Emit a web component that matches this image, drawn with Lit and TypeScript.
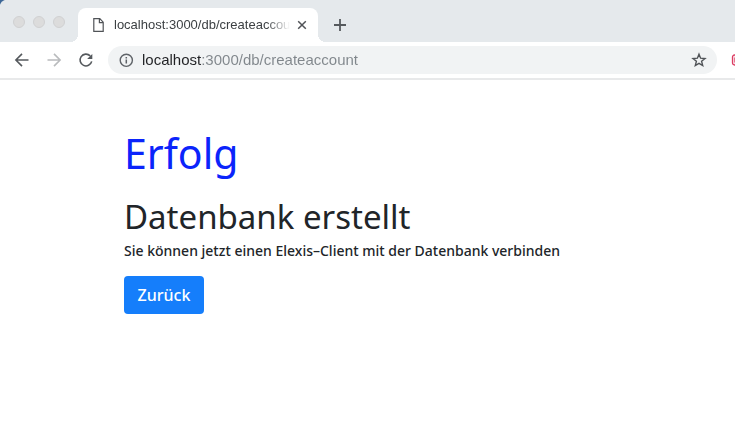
import { LitElement, html, css } from "lit";
import { customElement, state } from "lit/decorators.js";

@customElement("browser-tabs")
class BrowserTabs extends LitElement {
  static styles = css`
    :host { display: flex; height: 42px; background: linear-gradient(135deg, #3d6797 3px, #e5e9ec 4px); overflow: hidden; }
    * { box-sizing: border-box; }
    .strip { display: flex; flex: 1; align-items: flex-end; background: #e5e9ec; border-top-left-radius: 6px; }
    .dots { display: flex; gap: 8px; padding: 0 13px 14px; }
    .dot { width: 12px; height: 12px; border-radius: 50%; background: #dcdcdc; border: 1px solid #d0d1d2; }
    .tab { position: relative; display: flex; align-items: center; width: 240px; height: 34px; padding: 0 8px 0 15px; background: #fff; border-radius: 8px 8px 0 0; }
    .tab::before, .tab::after { content: ""; position: absolute; bottom: 0; width: 8px; height: 8px; }
    .tab::before { right: 100%; background: radial-gradient(circle at 0 0, transparent 8px, #fff 8px); }
    .tab::after { left: 100%; background: radial-gradient(circle at 100% 0, transparent 8px, #fff 8px); }
    .title { flex: 1; min-width: 0; margin: 0 4px 0 10px; overflow: hidden; white-space: nowrap; font: 13px/16px "Liberation Sans", sans-serif; color: #3c4043;
      -webkit-mask-image: linear-gradient(90deg, #000 calc(100% - 24px), transparent); mask-image: linear-gradient(90deg, #000 calc(100% - 24px), transparent); }
    button { display: flex; flex: none; padding: 0; border: 0; background: none; }
    .add { margin: 0 0 9px 14px; }
    svg { display: block; flex: none; }
  `;
  render() {
    return html`
      <div class="strip">
        <div class="dots"><span class="dot"></span><span class="dot"></span><span class="dot"></span></div>
        <div class="tab">
          <svg width="11" height="16" viewBox="0 0 11 16" fill="none" stroke="#505357" stroke-width="1.2"><path d="M.8 1.7h6l3.4 3.5v9.2H.8zM6.4 1.7v3.9h3.8"/></svg>
          <span class="title">localhost:3000/db/createaccount</span>
          <button aria-label="Tab schließen">
            <svg width="16" height="16" viewBox="0 0 16 16" stroke="#505357" stroke-width="1.5"><path d="M4.2 4.2l7.6 7.6M11.8 4.2l-7.6 7.6"/></svg>
          </button>
        </div>
        <button class="add" aria-label="Neuer Tab">
          <svg width="16" height="16" viewBox="0 0 16 16" stroke="#55595d" stroke-width="1.8"><path d="M8 2v12M2 8h12"/></svg>
        </button>
      </div>`;
  }
}

@customElement("browser-toolbar")
class BrowserToolbar extends LitElement {
  static styles = css`
    :host { display: flex; align-items: center; height: 38px; box-sizing: border-box; padding-left: 14px; background: #fff; border-bottom: 2px solid #e8e9ea; overflow: hidden; }
    button { display: flex; flex: none; padding: 0; border: 0; background: none; }
    svg { display: block; flex: none; }
    .nav { display: flex; gap: 16px; margin-right: 14px; }
    .omnibox { display: flex; flex: 1; min-width: 0; align-items: center; height: 28px; box-sizing: border-box; padding: 0 10px; border-radius: 14px; background: #f1f3f4; }
    .address { flex: 1; min-width: 0; height: 20px; margin: 0 8px; padding: 0; border: 0; outline: 0; font: 15px/20px "Liberation Sans", sans-serif; color: transparent;
      background: linear-gradient(90deg, #202124 60px, #80868b 60px); -webkit-background-clip: text; background-clip: text; }
    .extension { width: 18px; flex: none; overflow: hidden; padding-left: 14px; box-sizing: border-box; }
  `;
  render() {
    return html`
      <div class="nav">
        <button aria-label="Zurück">
          <svg width="16" height="16" viewBox="0 0 16 16" fill="none" stroke="#55595d" stroke-width="1.6"><path d="M14.5 8H2.4M8 1.9L1.9 8 8 14.1"/></svg>
        </button>
        <button aria-label="Vorwärts">
          <svg width="16" height="16" viewBox="0 0 16 16" fill="none" stroke="#b9bbbd" stroke-width="1.6"><path d="M1.5 8h12.1M8 1.9L14.1 8 8 14.1"/></svg>
        </button>
        <button aria-label="Neu laden">
          <svg width="16" height="16" viewBox="0 0 16 16"><path d="M13.7 9.4A5.9 5.9 0 1 1 12.2 3.9" fill="none" stroke="#55595d" stroke-width="1.6"/><path d="M14.3 1.9v5.2H9.1z" fill="#55595d"/></svg>
        </button>
      </div>
      <div class="omnibox">
        <svg width="16" height="16" viewBox="0 0 16 16"><circle cx="8.3" cy="8.3" r="6.1" fill="none" stroke="#5f6368" stroke-width="1.4"/><path d="M8.3 7.5v4M8.3 4.9v1.5" stroke="#5f6368" stroke-width="1.5"/></svg>
        <input class="address" aria-label="Adresse" spellcheck="false" value="localhost:3000/db/createaccount">
        <button aria-label="Lesezeichen">
          <svg width="16" height="16" viewBox="0 0 16 16" fill="none" stroke="#505357" stroke-width="1.4"><path d="M8 2.2l1.6 4 4.4.3-3.4 2.8 1.1 4.3L8 11.3l-3.7 2.3 1.1-4.3L2 6.5l4.4-.3z"/></svg>
        </button>
      </div>
      <button class="extension" aria-label="Erweiterung">
        <svg width="12" height="12" viewBox="0 0 12 12" fill="#fbe3ea" stroke="#dc3d62" stroke-width="1.3"><rect x="1.5" y="1" width="10" height="10" rx="2"/><path d="M4 3.5v5"/></svg>
      </button>`;
  }
}

@customElement("app-root")
class AppRoot extends LitElement {
  @state() private message = "Sie können jetzt einen Elexis–Client mit der Datenbank verbinden";
  static styles = css`
    :host { display: block; min-height: 100vh; background: #fff; font-family: "Noto Sans", sans-serif; color: #212529; }
    main { padding: 48px 124px; }
    h1, h2, p { margin: 0; font-weight: 400; }
    h1 { margin-bottom: 16px; font-size: 41px; line-height: 50px; color: #0b24fb; }
    h2 { font-size: 33px; line-height: 46px; }
    p { margin-bottom: 14px; font-size: 14px; font-weight: 500; line-height: 22px; white-space: nowrap; }
    .back { min-width: 80px; height: 38px; padding: 0 12px; border: 0; border-radius: 4px; background: #157efb; color: #fff; font: 500 16px/24px "Noto Sans", sans-serif; }
  `;
  render() {
    return html`
      <browser-tabs></browser-tabs>
      <browser-toolbar></browser-toolbar>
      <main>
        <h1>Erfolg</h1>
        <h2>Datenbank erstellt</h2>
        <p>${this.message}</p>
        <button class="back">Zurück</button>
      </main>`;
  }
}
